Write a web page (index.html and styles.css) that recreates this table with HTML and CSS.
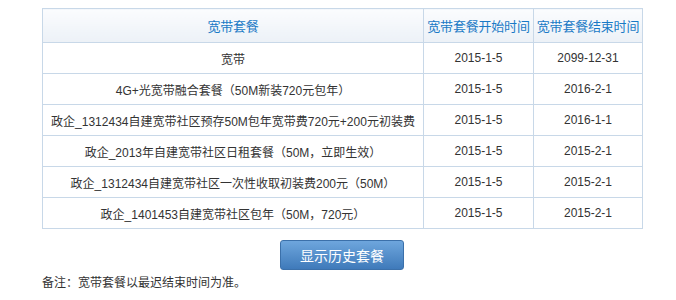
FILE: index.html
```html
<!DOCTYPE html>
<html lang="zh-CN">
<head>
<meta charset="utf-8">
<link rel="stylesheet" href="styles.css">
</head>
<body>
<div class="wrap">
  <table class="plans">
    <colgroup>
      <col class="c1"><col class="c2"><col class="c3">
    </colgroup>
    <thead>
      <tr><th>宽带套餐</th><th>宽带套餐开始时间</th><th>宽带套餐结束时间</th></tr>
    </thead>
    <tbody>
      <tr><td>宽带</td><td>2015-1-5</td><td>2099-12-31</td></tr>
      <tr><td>4G+光宽带融合套餐（50M新装720元包年）</td><td>2015-1-5</td><td>2016-2-1</td></tr>
      <tr><td>政企_1312434自建宽带社区预存50M包年宽带费720元+200元初装费</td><td>2015-1-5</td><td>2016-1-1</td></tr>
      <tr><td>政企_2013年自建宽带社区日租套餐（50M，立即生效）</td><td>2015-1-5</td><td>2015-2-1</td></tr>
      <tr><td>政企_1312434自建宽带社区一次性收取初装费200元（50M）</td><td>2015-1-5</td><td>2015-2-1</td></tr>
      <tr><td>政企_1401453自建宽带社区包年（50M，720元）</td><td>2015-1-5</td><td>2015-2-1</td></tr>
    </tbody>
  </table>
  <div class="actions"><button class="btn">显示历史套餐</button></div>
  <p class="note">备注：宽带套餐以最迟结束时间为准。</p>
</div>
</body>
</html>
```
FILE: styles.css
```css
html, body {
  margin: 0;
  padding: 0;
  background: #fff;
}
body {
  font-family: "Liberation Sans", Arial, "Noto Sans CJK SC", sans-serif;
  font-size: 12px;
  color: #333;
}
.wrap {
  width: 600px;
  padding: 8px 0 0 42px;
}
.plans {
  width: 600px;
  border-collapse: collapse;
  table-layout: fixed;
}
.c1 { width: 381px; }
.c2 { width: 110px; }
.c3 { width: 109px; }
.plans th, .plans td {
  border: 1px solid #c8d8e8;
  text-align: center;
  vertical-align: middle;
  padding: 0;
  white-space: nowrap;
}
.plans th {
  height: 33px;
  font-size: 13px;
  font-weight: normal;
  color: #1a7ac6;
  background: linear-gradient(#fbfcfe, #ecf1f7);
  letter-spacing: -0.2px;
}
.plans td {
  height: 30px;
  font-size: 12px;
  color: #333;
}
.actions {
  display: flex;
  justify-content: center;
  padding-top: 11px;
}
.btn {
  width: 124px;
  height: 30px;
  border: 1px solid #3b70aa;
  border-radius: 3px;
  background: linear-gradient(#6ea6dd, #3f7aba);
  color: #fff;
  font-family: "Liberation Sans", Arial, "Noto Sans CJK SC", sans-serif;
  font-size: 14px;
  padding: 0;
}
.note {
  margin: 4px 0 0 0;
  line-height: 18px;
  font-size: 12px;
  color: #333;
}
```
